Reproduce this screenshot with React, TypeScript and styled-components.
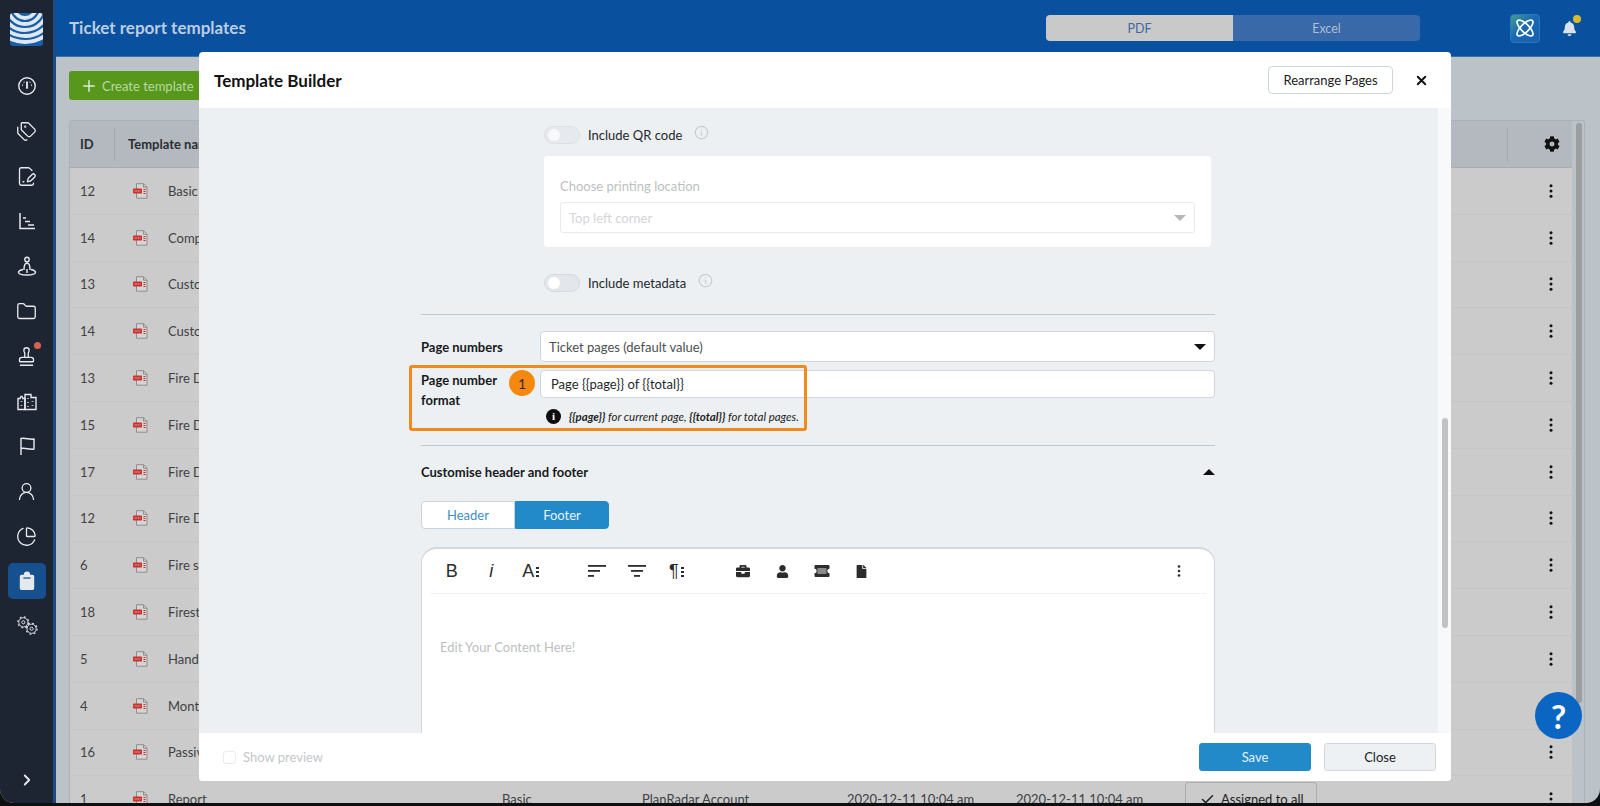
import React from "react";
import styled, { createGlobalStyle } from "styled-components";
import { ChevronRight, FileSignature, Folder, Info, Plus, Stamp, Tags, UserRound, X, ChartPie, Check } from "lucide-react";
import { FaBell, FaBriefcase, FaCog, FaFile, FaUser } from "react-icons/fa";

const GlobalStyle = createGlobalStyle`
  html, body { margin: 0; padding: 0; height: 100%; background: #0e0f10; overflow: hidden; }
  body { font-family: Lato, "Noto Sans", sans-serif; }
  * { box-sizing: border-box; }
`;

const Frame = styled.div`
  position: relative;
  display: flex;
  height: 803px;
  overflow: hidden;
  border-radius: 0 0 14px 14px;
  background: #bcc3c8;
`;

const Sidebar = styled.aside`
  width: 56px;
  flex-shrink: 0;
  display: flex;
  flex-direction: column;
  align-items: center;
  padding: 13px 0 0;
  background: #1e2532;
  border-right: 3px solid #1b4b84;
  color: #e8ebee;
`;

const Nav = styled.nav`
  display: flex;
  flex-direction: column;
  gap: 9px;
  margin-top: 22px;
  flex: 1;
`;

const NavItem = styled.div<{ $active?: boolean }>`
  position: relative;
  width: 38px;
  height: 36px;
  display: flex;
  align-items: center;
  justify-content: center;
  border-radius: 5px;
  background: ${({ $active }) => ($active ? "#17508f" : "transparent")};
`;

const RedDot = styled.span`
  position: absolute;
  top: 4px;
  right: 5px;
  width: 7px;
  height: 7px;
  border-radius: 50%;
  background: #d9604f;
`;

const Expand = styled.div`
  height: 32px;
  display: flex;
  justify-content: center;
`;

const Main = styled.main`
  flex: 1;
  min-width: 0;
  display: flex;
  flex-direction: column;
`;

const TopBar = styled.header`
  height: 57px;
  flex-shrink: 0;
  display: flex;
  align-items: center;
  padding: 0 0 0 13px;
  background: #09509f;
  border-bottom: 1px solid #3b6fa8;
`;

const PageTitle = styled.h1`
  flex: 1;
  margin: 0 0 1px;
  font-size: 17px;
  font-weight: 700;
  color: #bccde2;
`;

const Switcher = styled.div`
  display: flex;
  width: 374px;
  height: 26px;
  border-radius: 4px;
  overflow: hidden;
`;

const SwitchTab = styled.div<{ $on?: boolean }>`
  flex: 1;
  display: flex;
  align-items: center;
  justify-content: center;
  font-size: 12.5px;
  background: ${({ $on }) => ($on ? "#c9c9c9" : "#3a69a9")};
  color: ${({ $on }) => ($on ? "#3f6aa0" : "#aebfd6")};
`;

const AppTile = styled.div`
  width: 30px;
  height: 29px;
  margin-left: 90px;
  display: flex;
  align-items: center;
  justify-content: center;
  border-radius: 4px;
  border: 1px solid #2a79bd;
  background: linear-gradient(135deg, #3f9f8a 0%, #1c68b4 45%, #1560b0 100%);
`;

const BellBox = styled.div`
  position: relative;
  width: 30px;
  margin-left: 14px;
  margin-right: 16px;
  display: flex;
  justify-content: center;
  color: #d9e4ef;
`;

const YellowDot = styled.span`
  position: absolute;
  top: -6px;
  right: 3px;
  width: 8px;
  height: 8px;
  border-radius: 50%;
  background: #d9bb2a;
`;

const Content = styled.div`
  padding: 14px 15px 0 13px;
`;

const CreateButton = styled.div`
  display: flex;
  align-items: center;
  gap: 4px;
  width: 190px;
  height: 29px;
  padding-left: 11px;
  border-radius: 3px;
  background: #57971c;
  color: #bcd8a2;
  font-size: 13px;
`;

const Table = styled.div`
  display: flex;
  margin-top: 20px;
  border: 1px solid #aab1b7;
  border-radius: 3px;
  background: #bcc3c8;
`;

const TableBody = styled.div`
  width: 1502px;
  flex-shrink: 0;
`;

const HeadRow = styled.div`
  display: grid;
  grid-template-columns: 44px 1fr 65px;
  align-items: center;
  height: 47px;
  background: #b3b9bf;
  border-bottom: 1px solid #a7adb3;
  font-size: 13px;
  font-weight: 700;
  color: #2b2e31;
`;

const HeadCell = styled.div<{ $gear?: boolean }>`
  height: 33px;
  display: flex;
  align-items: center;
  padding-left: ${({ $gear }) => ($gear ? "36px" : "13px")};
  border-left: 1px solid #a2a8ae;
  color: #2b2e31;

  &:first-child {
    padding-left: 10px;
    border-left: none;
  }
`;

const Row = styled.div`
  display: grid;
  grid-template-columns: 44px 54px 334px 140px 205px 169px 169px 1fr 42px;
  align-items: center;
  height: 46.8px;
  background: #cbcbcb;
  border-bottom: 1px solid #c3c5c6;
  font-size: 13px;
  color: #3f4245;
`;

const IdCell = styled.div`
  padding-left: 10px;
`;

const PdfCell = styled.div`
  padding-left: 19px;
  display: flex;
`;

const AssignButton = styled.div`
  width: 132px;
  height: 34px;
  display: flex;
  align-items: center;
  gap: 6px;
  padding-left: 14px;
  border: 1px solid #a9adb0;
  border-radius: 3px;
  color: #222;
`;

const RowMenu = styled.div`
  display: flex;
  justify-content: center;
  color: #111;
`;

const ScrollColumn = styled.div`
  width: 13px;
  padding: 2px 3px 0 4px;
`;

const ScrollThumb = styled.div<{ $h: number }>`
  width: 6px;
  height: ${({ $h }) => $h}px;
  border-radius: 3px;
  background: #9b9d9f;
`;

const Modal = styled.section`
  position: absolute;
  left: 199px;
  top: 52px;
  width: 1252px;
  height: 729px;
  display: flex;
  flex-direction: column;
  border-radius: 4px;
  overflow: hidden;
  background: #fff;
`;

const ModalHeader = styled.div`
  height: 56px;
  flex-shrink: 0;
  display: flex;
  align-items: center;
  padding: 0 22px 0 15px;
`;

const ModalTitle = styled.h2`
  flex: 1;
  margin: 0;
  font-size: 17px;
  font-weight: 700;
  color: #111;
`;

const RearrangeButton = styled.div`
  width: 125px;
  height: 28px;
  display: flex;
  align-items: center;
  justify-content: center;
  margin-right: 21px;
  border: 1px solid #ced5dc;
  border-radius: 4px;
  font-size: 13px;
  color: #1c1c1c;
`;

const ModalMiddle = styled.div`
  flex: 1;
  min-height: 0;
  display: flex;
`;

const ModalBody = styled.div`
  flex: 1;
  overflow: hidden;
  padding: 18px 223px 0 222px;
  background: #ecf0f3;
`;

const ModalTrack = styled.div`
  width: 13px;
  flex-shrink: 0;
  padding: 310px 3px 0 4px;
  background: #f8f9fa;
`;

const ModalThumb = styled.div`
  width: 6px;
  height: 210px;
  border-radius: 3px;
  background: #c1c2c3;
`;

const ToggleRow = styled.div<{ $top?: number }>`
  display: flex;
  align-items: center;
  height: 18px;
  margin-top: ${({ $top }) => $top ?? 0}px;
  margin-left: 123px;
  font-size: 13px;
  color: #25282b;
`;

const Toggle = styled.span<{ $faint?: boolean }>`
  position: relative;
  width: 36px;
  height: 18px;
  margin-right: 8px;
  border-radius: 9px;
  border: 1px solid #d5dae0;
  background: #e3e6ea;
  opacity: ${({ $faint }) => ($faint ? 0.65 : 1)};

  &::after {
    content: "";
    position: absolute;
    left: 3px;
    top: 2px;
    width: 12px;
    height: 12px;
    border-radius: 50%;
    background: #fff;
  }
`;

const HintIcon = styled.span`
  display: flex;
  margin: -6px 0 0 12px;
  color: #c9ced3;
`;

const QrCard = styled.div`
  width: 667px;
  height: 91px;
  margin: 12px 0 0 123px;
  padding: 21px 16px 0;
  border-radius: 4px;
  background: #fff;
`;

const QrLabel = styled.div`
  height: 18px;
  line-height: 18px;
  font-size: 13px;
  color: #bcbfc2;
`;

const QrSelect = styled.div`
  height: 31px;
  display: flex;
  align-items: center;
  justify-content: space-between;
  margin-top: 7px;
  padding: 0 8px;
  border: 1px solid #e7eaee;
  border-radius: 3px;
  font-size: 13px;
  color: #d3d5d8;
`;

const Caret = styled.span<{ $up?: boolean; $color: string }>`
  width: 0;
  height: 0;
  border-left: 6px solid transparent;
  border-right: 6px solid transparent;
  border-top: ${({ $up, $color }) => ($up ? "none" : `6px solid ${$color}`)};
  border-bottom: ${({ $up, $color }) => ($up ? `6px solid ${$color}` : "none")};
`;

const Divider = styled.hr<{ $top: number }>`
  height: 1px;
  margin: ${({ $top }) => $top}px 0 0;
  border: none;
  background: #bcc8d2;
`;

const FieldRow = styled.div<{ $top: number }>`
  position: relative;
  display: grid;
  grid-template-columns: 119px 1fr;
  margin-top: ${({ $top }) => $top}px;
`;

const FieldLabel = styled.div<{ $center?: boolean }>`
  max-width: 90px;
  align-self: ${({ $center }) => ($center ? "center" : "start")};
  white-space: ${({ $center }) => ($center ? "nowrap" : "normal")};
  font-size: 13px;
  line-height: 20px;
  font-weight: 700;
  color: #17191b;
`;

const SelectBox = styled.div`
  height: 31px;
  display: flex;
  align-items: center;
  justify-content: space-between;
  padding: 0 8px;
  border: 1px solid #cfd6dd;
  border-radius: 4px;
  background: #fff;
  font-size: 13px;
  color: #4c4f52;
`;

const TextInput = styled.div`
  height: 28px;
  display: flex;
  align-items: center;
  padding-left: 10px;
  border: 1px solid #cfd6dd;
  border-radius: 4px;
  background: #fff;
  font-size: 13px;
  color: #26282a;
`;

const FormatHint = styled.div`
  display: flex;
  align-items: center;
  gap: 8px;
  height: 16px;
  margin-top: 10px;
  padding-left: 6px;
  font-size: 11.5px;
  font-style: italic;
  color: #1d1f21;

  b { font-weight: 700; }
`;

const InfoDot = styled.span`
  width: 15px;
  height: 15px;
  flex-shrink: 0;
  display: flex;
  align-items: center;
  justify-content: center;
  border-radius: 50%;
  background: #0d0d0d;
  color: #fff;
  font: 700 11px "Liberation Serif", serif;
`;

const Highlight = styled.div`
  position: absolute;
  left: -12px;
  top: -5px;
  width: 398px;
  height: 66px;
  border: 3px solid #f08a1d;
  border-radius: 3px;
  pointer-events: none;
`;

const StepBadge = styled.div`
  position: absolute;
  left: 88px;
  top: 0;
  width: 26px;
  height: 26px;
  display: flex;
  align-items: center;
  justify-content: center;
  border-radius: 50%;
  background: #f5890f;
  font-size: 14px;
  color: #3b2a12;
`;

const SectionHead = styled.div`
  display: flex;
  align-items: center;
  justify-content: space-between;
  height: 20px;
  margin-top: 16px;
  font-size: 13px;
  font-weight: 700;
  color: #17191b;
`;

const Tabs = styled.div`
  display: flex;
  margin-top: 19px;
`;

const TabButton = styled.div<{ $on?: boolean }>`
  width: 94px;
  height: 28px;
  display: flex;
  align-items: center;
  justify-content: center;
  font-size: 13px;
  border: 1px solid ${({ $on }) => ($on ? "#238aca" : "#c9d3dc")};
  border-radius: ${({ $on }) => ($on ? "0 4px 4px 0" : "4px 0 0 4px")};
  background: ${({ $on }) => ($on ? "#238aca" : "#fff")};
  color: ${({ $on }) => ($on ? "#e8f3fa" : "#3f8fc4")};
`;

const Editor = styled.div`
  height: 320px;
  margin-top: 18px;
  border: 1px solid #d3d8dd;
  border-top-width: 2px;
  border-radius: 16px 16px 0 0;
  background: #fff;
`;

const Toolbar = styled.div`
  height: 45px;
  display: flex;
  align-items: center;
  gap: 27px;
  margin: 0 8px;
  padding: 0 7px 0 2px;
  border-bottom: 1px solid #f0f2f4;
`;

const ToolGroup = styled.div`
  display: flex;
`;

const ToolSlot = styled.div`
  width: 39.5px;
  height: 24px;
  display: flex;
  align-items: center;
  justify-content: center;
  gap: 2px;
  color: #2c2c2c;
`;

const ToolGlyph = styled.span<{ $italic?: boolean }>`
  font-family: "Liberation Sans", sans-serif;
  font-size: 18px;
  font-style: ${({ $italic }) => ($italic ? "italic" : "normal")};
  color: #2c2c2c;
`;

const ToolSpacer = styled.div`
  flex: 1;
`;

const Placeholder = styled.div`
  padding: 44px 0 0 18px;
  font-size: 13px;
  line-height: 18px;
  color: #bcbfc2;
`;

const ModalFooter = styled.div`
  height: 48px;
  flex-shrink: 0;
  display: flex;
  align-items: center;
  gap: 13px;
  padding: 0 15px 0 24px;
  background: #fff;
`;

const PreviewToggle = styled.label`
  flex: 1;
  display: flex;
  align-items: center;
  gap: 7px;
  font-size: 13px;
  color: #c4c7ca;
`;

const CheckBox = styled.span`
  width: 13px;
  height: 13px;
  border: 1px solid #e8ebee;
  border-radius: 3px;
`;

const FooterButton = styled.div<{ $primary?: boolean }>`
  width: 112px;
  height: 28px;
  display: flex;
  align-items: center;
  justify-content: center;
  font-size: 13px;
  border: 1px solid ${({ $primary }) => ($primary ? "#238aca" : "#cfd6dd")};
  border-radius: 3px;
  background: ${({ $primary }) => ($primary ? "#238aca" : "#edf1f4")};
  color: ${({ $primary }) => ($primary ? "#e3f0f9" : "#222")};
`;

const HelpButton = styled.div`
  position: absolute;
  left: 1535px;
  top: 692px;
  width: 47px;
  height: 47px;
  display: flex;
  align-items: center;
  justify-content: center;
  border-radius: 50%;
  background: #0a66c2;
  color: #fff;
  font-size: 33px;
  font-weight: 700;
`;

const Dots = ({ size = 16 }: { size?: number }) => (
  <svg width={size} height={size} viewBox="0 0 16 16" fill="currentColor">
    <circle cx="8" cy="2.8" r="1.5" />
    <circle cx="8" cy="8" r="1.5" />
    <circle cx="8" cy="13.2" r="1.5" />
  </svg>
);

const SmallDots = () => (
  <svg width="3" height="11" viewBox="0 0 3 11" fill="currentColor">
    <rect y="1" width="3" height="2" />
    <rect y="5" width="3" height="2" />
    <rect y="9" width="3" height="2" />
  </svg>
);

const Logo = () => (
  <svg width="33" height="33" viewBox="0 0 33 33" fill="none">
    <defs>
      <clipPath id="logo-clip">
        <rect width="33" height="33" rx="3" />
      </clipPath>
    </defs>
    <g clipPath="url(#logo-clip)">
      <rect width="33" height="33" fill="#1a5da8" />
      <g stroke="#dfe8f0" strokeWidth="3.8" fill="none">
        <circle cx="15" cy="-6" r="11" />
        <circle cx="15" cy="-6" r="17" />
        <circle cx="15" cy="-6" r="23" />
        <circle cx="15" cy="-6" r="29" />
        <circle cx="15" cy="-6" r="35" />
      </g>
    </g>
  </svg>
);

const GaugeIcon = () => (
  <svg width="22" height="22" viewBox="0 0 24 24" fill="none" stroke="currentColor" strokeWidth="1.5">
    <circle cx="12" cy="12" r="9" />
    <path d="M12 7v8" strokeWidth="2" />
    <path d="M6.500 11h1.200M16.300 11h1.200M8.500 7.500l.6.6M15.500 7.500l-.6.6" />
  </svg>
);

const ChartIcon = () => (
  <svg width="24" height="24" viewBox="0 0 24 24" fill="none" stroke="currentColor" strokeWidth="1.5">
    <path d="M5 4v15.500h15" />
    <path d="M8 9h3M10 12.500h5M13 16h6" />
  </svg>
);

const PinIcon = () => (
  <svg width="24" height="24" viewBox="0 0 24 24" fill="none" stroke="currentColor" strokeWidth="1.4">
    <circle cx="12" cy="5.500" r="2.200" />
    <path d="M9 16c0-4 .5-7 3-7s3 3 3 7M12 19v-4" />
    <path d="M8 15.500c-3 .6-4.500 1.600-4.500 2.800 0 1.600 3.800 2.700 8.500 2.700s8.500-1.100 8.500-2.700c0-1.200-1.500-2.200-4.500-2.800" />
  </svg>
);

const BuildingsIcon = () => (
  <svg width="24" height="24" viewBox="0 0 24 24" fill="none" stroke="currentColor" strokeWidth="1.400">
    <path d="M3 20.500V9.500h2l1-2h1l1 2h2v11z" />
    <path d="M10 20.500V5.500h6v3h5v12z" />
    <path d="M6.500 12v.8M6.500 16v.8M13 9v.8M13 13v.8M13 17v.8M17.500 12v.8M17.500 16v.8" strokeWidth="1.800" />
  </svg>
);

const FlagIcon = () => (
  <svg width="24" height="24" viewBox="0 0 24 24" fill="none" stroke="currentColor" strokeWidth="1.400">
    <path d="M6 21V4.500c4.500-1 8.500 1.500 13 .5v10c-4.500 1-8.500-1.500-13-.5" />
  </svg>
);

const ClipboardIcon = () => (
  <svg width="18" height="20" viewBox="0 0 20 22" fill="#e6e9ec">
    <path d="M4 4h2.500a3.500 3.500 0 0 1 7 0H16a2 2 0 0 1 2 2v13a2 2 0 0 1-2 2H4a2 2 0 0 1-2-2V6a2 2 0 0 1 2-2z" />
    <rect x="6" y="7" width="8" height="1.400" fill="#17508f" />
  </svg>
);

const GearsIcon = () => (
  <svg width="22" height="22" viewBox="0 0 24 24" fill="none" stroke="currentColor">
    <circle cx="8" cy="8" r="5" strokeWidth="1" />
    <circle cx="8" cy="8" r="1.700" strokeWidth="1" />
    <circle cx="8" cy="8" r="6" strokeWidth="1.200" strokeDasharray="2 2.700" />
    <circle cx="17" cy="15" r="5" strokeWidth="1" />
    <circle cx="17" cy="15" r="1.700" strokeWidth="1" />
    <circle cx="17" cy="15" r="6" strokeWidth="1.200" strokeDasharray="2 2.700" />
  </svg>
);

const AtomIcon = () => (
  <svg width="22" height="22" viewBox="0 0 22 22" fill="none" stroke="#fff" strokeWidth="1.700">
    <ellipse cx="11" cy="11" rx="10.500" ry="4" transform="rotate(45 11 11)" />
    <ellipse cx="11" cy="11" rx="10.500" ry="4" transform="rotate(-45 11 11)" />
  </svg>
);

const PdfIcon = () => (
  <svg width="16" height="16" viewBox="0 0 16 16" fill="none">
    <path d="M3.500 .7h7l3.500 3.500v11h-10.500z" fill="#d4d4d4" stroke="#8d8d8d" />
    <path d="M10.500 .7v3.500H14" stroke="#8d8d8d" />
    <rect x="0" y="5.500" width="9" height="5" rx=".8" fill="#c9302c" />
    <path d="M1.500 8h6" stroke="#efb6b3" strokeWidth="1.200" strokeDasharray="1.200 .6" />
    <path d="M10.500 6.500h2M10.500 8.500h2M10.500 10.500h2" stroke="#c9302c" />
  </svg>
);

const AlignLeftIcon = () => (
  <svg width="18" height="12" viewBox="0 0 18 12" fill="#2c2c2c">
    <rect width="18" height="1.800" />
    <rect y="5" width="12" height="1.800" />
    <rect y="10" width="6" height="1.800" />
  </svg>
);

const AlignCenterIcon = () => (
  <svg width="18" height="12" viewBox="0 0 18 12" fill="#2c2c2c">
    <rect width="18" height="1.800" />
    <rect x="3" y="5" width="12" height="1.800" />
    <rect x="6" y="10" width="6" height="1.800" />
  </svg>
);

const TicketIcon = () => (
  <svg width="16" height="12" viewBox="0 0 16 12">
    <path d="M1.500 0h13a1 1 0 0 1 1 1v2.800a2.200 2.200 0 0 0 0 4.400V11a1 1 0 0 1-1 1h-13a1 1 0 0 1-1-1V8.200a2.200 2.200 0 0 0 0-4.400V1a1 1 0 0 1 1-1z" fill="#2c2c2c" />
    <rect x="3.500" y="3" width="9" height="6" fill="#8a8a8a" />
  </svg>
);

const rows = [
  { id: 12, name: "Basic report" },
  { id: 14, name: "Compact report" },
  { id: 13, name: "Custom report" },
  { id: 14, name: "Custom template" },
  { id: 13, name: "Fire Door Report" },
  { id: 15, name: "Fire Door Survey" },
  { id: 17, name: "Fire Door Audit" },
  { id: 12, name: "Fire Door Check" },
  { id: 6, name: "Fire safety" },
  { id: 18, name: "Firestopping" },
  { id: 5, name: "Handover" },
  { id: 4, name: "Monthly report" },
  { id: 16, name: "Passive fire" },
  { id: 1, name: "Report" },
];

const App: React.FC = () => {
  return (
    <>
      <GlobalStyle />
      <Frame>
        <Sidebar>
          <Logo />
          <Nav>
            <NavItem><GaugeIcon /></NavItem>
            <NavItem><Tags size={21} strokeWidth={1.5} /></NavItem>
            <NavItem><FileSignature size={21} strokeWidth={1.5} /></NavItem>
            <NavItem><ChartIcon /></NavItem>
            <NavItem><PinIcon /></NavItem>
            <NavItem><Folder size={21} strokeWidth={1.5} /></NavItem>
            <NavItem><Stamp size={21} strokeWidth={1.5} /><RedDot /></NavItem>
            <NavItem><BuildingsIcon /></NavItem>
            <NavItem><FlagIcon /></NavItem>
            <NavItem><UserRound size={21} strokeWidth={1.5} /></NavItem>
            <NavItem><ChartPie size={21} strokeWidth={1.5} /></NavItem>
            <NavItem $active><ClipboardIcon /></NavItem>
            <NavItem><GearsIcon /></NavItem>
          </Nav>
          <Expand><ChevronRight size={18} strokeWidth={2.4} /></Expand>
        </Sidebar>

        <Main>
          <TopBar>
            <PageTitle>Ticket report templates</PageTitle>
            <Switcher>
              <SwitchTab $on>PDF</SwitchTab>
              <SwitchTab>Excel</SwitchTab>
            </Switcher>
            <AppTile><AtomIcon /></AppTile>
            <BellBox>
              <FaBell size={15} />
              <YellowDot />
            </BellBox>
          </TopBar>

          <Content>
            <CreateButton>
              <Plus size={18} strokeWidth={2} color="#dcebcf" />
              Create template
            </CreateButton>
            <Table>
              <TableBody>
                <HeadRow>
                  <HeadCell>ID</HeadCell>
                  <HeadCell>Template name</HeadCell>
                  <HeadCell $gear><FaCog size={16} color="#111" /></HeadCell>
                </HeadRow>
                {rows.map((row, i) => (
                  <Row key={i}>
                    <IdCell>{row.id}</IdCell>
                    <PdfCell><PdfIcon /></PdfCell>
                    <div>{row.name}</div>
                    <div>Basic</div>
                    <div>PlanRadar Account</div>
                    <div>2020-12-11 10:04 am</div>
                    <div>2020-12-11 10:04 am</div>
                    <AssignButton><Check size={15} strokeWidth={2.4} />Assigned to all</AssignButton>
                    <RowMenu><Dots /></RowMenu>
                  </Row>
                ))}
              </TableBody>
              <ScrollColumn><ScrollThumb $h={580} /></ScrollColumn>
            </Table>
          </Content>
        </Main>

        <Modal>
          <ModalHeader>
            <ModalTitle>Template Builder</ModalTitle>
            <RearrangeButton>Rearrange Pages</RearrangeButton>
            <X size={15} strokeWidth={3} color="#111" />
          </ModalHeader>

          <ModalMiddle>
            <ModalBody>
              <ToggleRow>
                <Toggle $faint />
                Include QR code
                <HintIcon><Info size={15} /></HintIcon>
              </ToggleRow>
              <QrCard>
                <QrLabel>Choose printing location</QrLabel>
                <QrSelect>
                  Top left corner
                  <Caret $color="#b5b7ba" />
                </QrSelect>
              </QrCard>
              <ToggleRow $top={27}>
                <Toggle />
                Include metadata
                <HintIcon><Info size={15} /></HintIcon>
              </ToggleRow>

              <Divider $top={22} />

              <FieldRow $top={16}>
                <FieldLabel $center>Page numbers</FieldLabel>
                <SelectBox>
                  Ticket pages (default value)
                  <Caret $color="#111" />
                </SelectBox>
              </FieldRow>
              <FieldRow $top={8}>
                <FieldLabel>Page number format</FieldLabel>
                <div>
                  <TextInput>{"Page {{page}} of {{total}}"}</TextInput>
                  <FormatHint>
                    <InfoDot>i</InfoDot>
                    <span>
                      <b>{"{{page}}"}</b> for current page, <b>{"{{total}}"}</b> for total pages.
                    </span>
                  </FormatHint>
                </div>
                <Highlight />
                <StepBadge>1</StepBadge>
              </FieldRow>

              <Divider $top={21} />

              <SectionHead>
                Customise header and footer
                <Caret $up $color="#111" />
              </SectionHead>
              <Tabs>
                <TabButton>Header</TabButton>
                <TabButton $on>Footer</TabButton>
              </Tabs>

              <Editor>
                <Toolbar>
                  <ToolGroup>
                    <ToolSlot><ToolGlyph>B</ToolGlyph></ToolSlot>
                    <ToolSlot><ToolGlyph $italic>i</ToolGlyph></ToolSlot>
                    <ToolSlot><ToolGlyph>A</ToolGlyph><SmallDots /></ToolSlot>
                  </ToolGroup>
                  <ToolGroup>
                    <ToolSlot><AlignLeftIcon /></ToolSlot>
                    <ToolSlot><AlignCenterIcon /></ToolSlot>
                    <ToolSlot><ToolGlyph>¶</ToolGlyph><SmallDots /></ToolSlot>
                  </ToolGroup>
                  <ToolGroup>
                    <ToolSlot><FaBriefcase size={14} /></ToolSlot>
                    <ToolSlot><FaUser size={13} /></ToolSlot>
                    <ToolSlot><TicketIcon /></ToolSlot>
                    <ToolSlot><FaFile size={13} /></ToolSlot>
                  </ToolGroup>
                  <ToolSpacer />
                  <ToolSlot><Dots size={14} /></ToolSlot>
                </Toolbar>
                <Placeholder>Edit Your Content Here!</Placeholder>
              </Editor>
            </ModalBody>
            <ModalTrack><ModalThumb /></ModalTrack>
          </ModalMiddle>

          <ModalFooter>
            <PreviewToggle><CheckBox />Show preview</PreviewToggle>
            <FooterButton $primary>Save</FooterButton>
            <FooterButton>Close</FooterButton>
          </ModalFooter>
        </Modal>

        <HelpButton>?</HelpButton>
      </Frame>
    </>
  );
};

export default App;
